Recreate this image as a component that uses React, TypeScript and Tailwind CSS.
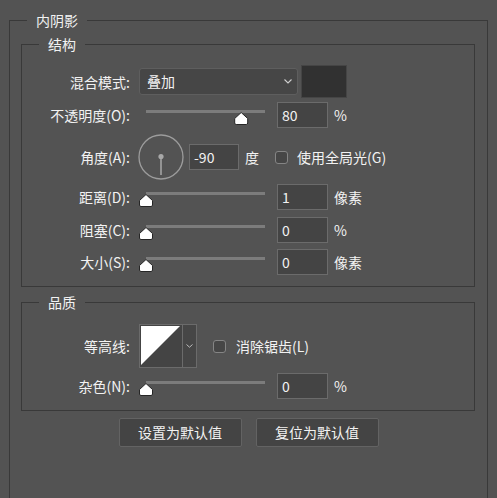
const font = { fontFamily: '"Noto Sans CJK SC", "Noto Sans", sans-serif' };

function Legend({ children }: { children: React.ReactNode }) {
	return (
		<div className="-mt-[11px] ml-[17px] w-fit bg-[#535353] px-[9px] text-[14px] leading-[20px] text-[#f2f2f2]">
			{children}
		</div>
	);
}

type RowProps = { label: string; className?: string; children: React.ReactNode };

function Row({ label, className = "", children }: RowProps) {
	return (
		<div className={`flex items-center ${className}`}>
			<div className="w-[108px] shrink-0 text-right text-[14px] leading-[20px] text-[#f2f2f2]">{label}</div>
			{children}
		</div>
	);
}

function Slider({ value }: { value: number }) {
	const x = 7 + value * 119;
	return (
		<svg width="133" height="26" className="ml-[9px] shrink-0">
			<rect x="7" y="8" width="119" height="3" fill="#7c7c7c" />
			<path
				d={`M${x} 10.5 L${x + 6.5} 16.5 V21 Q${x + 6.5} 22.5 ${x + 5} 22.5 H${x - 5} Q${x - 6.5} 22.5 ${x - 6.5} 21 V16.5 Z`}
				fill="#ffffff"
				stroke="#262626"
				strokeWidth="1"
			/>
		</svg>
	);
}

function NumberBox({ value, className = "" }: { value: string; className?: string }) {
	return (
		<div
			className={`flex h-[26px] shrink-0 items-center border border-[#6b6b6b] bg-[#444444] pl-[4px] text-[14px] text-[#f2f2f2] ${className}`}
		>
			{value}
		</div>
	);
}

function Unit({ children, className = "" }: { children: React.ReactNode; className?: string }) {
	return <span className={`text-[14px] leading-[20px] text-[#f2f2f2] ${className}`}>{children}</span>;
}

function Checkbox({ className = "" }: { className?: string }) {
	return <div className={`h-[13px] w-[13px] shrink-0 rounded-[3px] border border-[#858585] bg-[#464646] ${className}`} />;
}

function Chevron() {
	return (
		<svg width="8" height="5" viewBox="0 0 8 5">
			<path d="M0.5 0.5 L4 4 L7.5 0.5" fill="none" stroke="#cfcfcf" strokeWidth="1.1" />
		</svg>
	);
}

function SliderRow({ label, value, number, unit, className = "" }: { label: string; value: number; number: string; unit: string; className?: string }) {
	return (
		<Row label={label} className={`h-[26px] ${className}`}>
			<Slider value={value} />
			<NumberBox value={number} className="ml-[5px] w-[51px]" />
			<Unit className="ml-[6px]">{unit}</Unit>
		</Row>
	);
}

export default function App() {
	return (
		<div className="h-[498px] w-[497px] overflow-hidden bg-[#535353] pt-[20px]" style={font}>
			<div className="ml-[9px] h-[520px] w-[479px] border border-[#393939]">
				<Legend>内阴影</Legend>

				<div className="ml-[11px] mt-[14px] h-[243px] w-[454px] border border-[#393939]">
					<Legend>结构</Legend>

					<Row label="混合模式:" className="mt-[11px] h-[33px]">
						<div className="ml-[9px] flex h-[27px] w-[159px] shrink-0 items-center justify-between rounded-[3px] border border-[#5e5e5e] bg-[#464646] pl-[7px] pr-[5px] text-[14px] text-[#f2f2f2]">
							<span>叠加</span>
							<Chevron />
						</div>
						<div className="ml-[3px] h-[33px] w-[46px] shrink-0 border border-[#454545] bg-[#313131]" />
					</Row>

					<SliderRow label="不透明度(O):" value={0.8} number="80" unit="%" className="mt-[4px]" />

					<Row label="角度(A):" className="mt-[6px] h-[46px]">
						<svg width="46" height="46" className="ml-[8px] shrink-0">
							<circle cx="23" cy="23" r="22" fill="none" stroke="#9c9c9c" strokeWidth="1.3" />
							<line x1="23" y1="23" x2="23" y2="41" stroke="#a8a8a8" strokeWidth="1.5" />
							<circle cx="23" cy="22.5" r="2.6" fill="#a8a8a8" />
						</svg>
						<NumberBox value="-90" className="ml-[5px] w-[50px]" />
						<Unit className="ml-[6px]">度</Unit>
						<Checkbox className="ml-[16px]" />
						<Unit className="ml-[9px]">使用全局光(G)</Unit>
					</Row>

					<SliderRow label="距离(D):" value={0} number="1" unit="像素" className="mt-[4px]" />
					<SliderRow label="阻塞(C):" value={0} number="0" unit="%" className="mt-[7px]" />
					<SliderRow label="大小(S):" value={0} number="0" unit="像素" className="mt-[6px]" />
				</div>

				<div className="ml-[11px] mt-[15px] h-[109px] w-[454px] border border-[#393939]">
					<Legend>品质</Legend>

					<Row label="等高线:" className="mt-[12px] h-[44px]">
						<div className="ml-[9px] flex h-[44px] shrink-0">
							<svg width="44" height="44" className="shrink-0">
								<rect x="0.5" y="0.5" width="43" height="43" fill="#444444" stroke="#6b6b6b" />
								<path d="M2 2 H41 L2 41 Z" fill="#ffffff" />
							</svg>
							<div className="flex h-[44px] w-[14px] items-center justify-center border border-l-0 border-[#6b6b6b] bg-[#464646]">
								<svg width="7" height="4" viewBox="0 0 7 4">
									<path d="M0.5 0.5 L3.5 3.2 L6.5 0.5" fill="none" stroke="#bdbdbd" strokeWidth="1" />
								</svg>
							</div>
						</div>
						<Checkbox className="ml-[16px]" />
						<Unit className="ml-[10px]">消除锯齿(L)</Unit>
					</Row>

					<SliderRow label="杂色(N):" value={0} number="0" unit="%" className="mt-[5px]" />
				</div>

				<div className="mt-[7px] flex justify-center gap-[14px]">
					<button className="h-[29px] w-[123px] rounded-[2px] border border-[#636363] bg-[#444444] text-[14px] text-[#f2f2f2]">
						设置为默认值
					</button>
					<button className="h-[29px] w-[123px] rounded-[2px] border border-[#636363] bg-[#444444] text-[14px] text-[#f2f2f2]">
						复位为默认值
					</button>
				</div>
			</div>
		</div>
	);
}
